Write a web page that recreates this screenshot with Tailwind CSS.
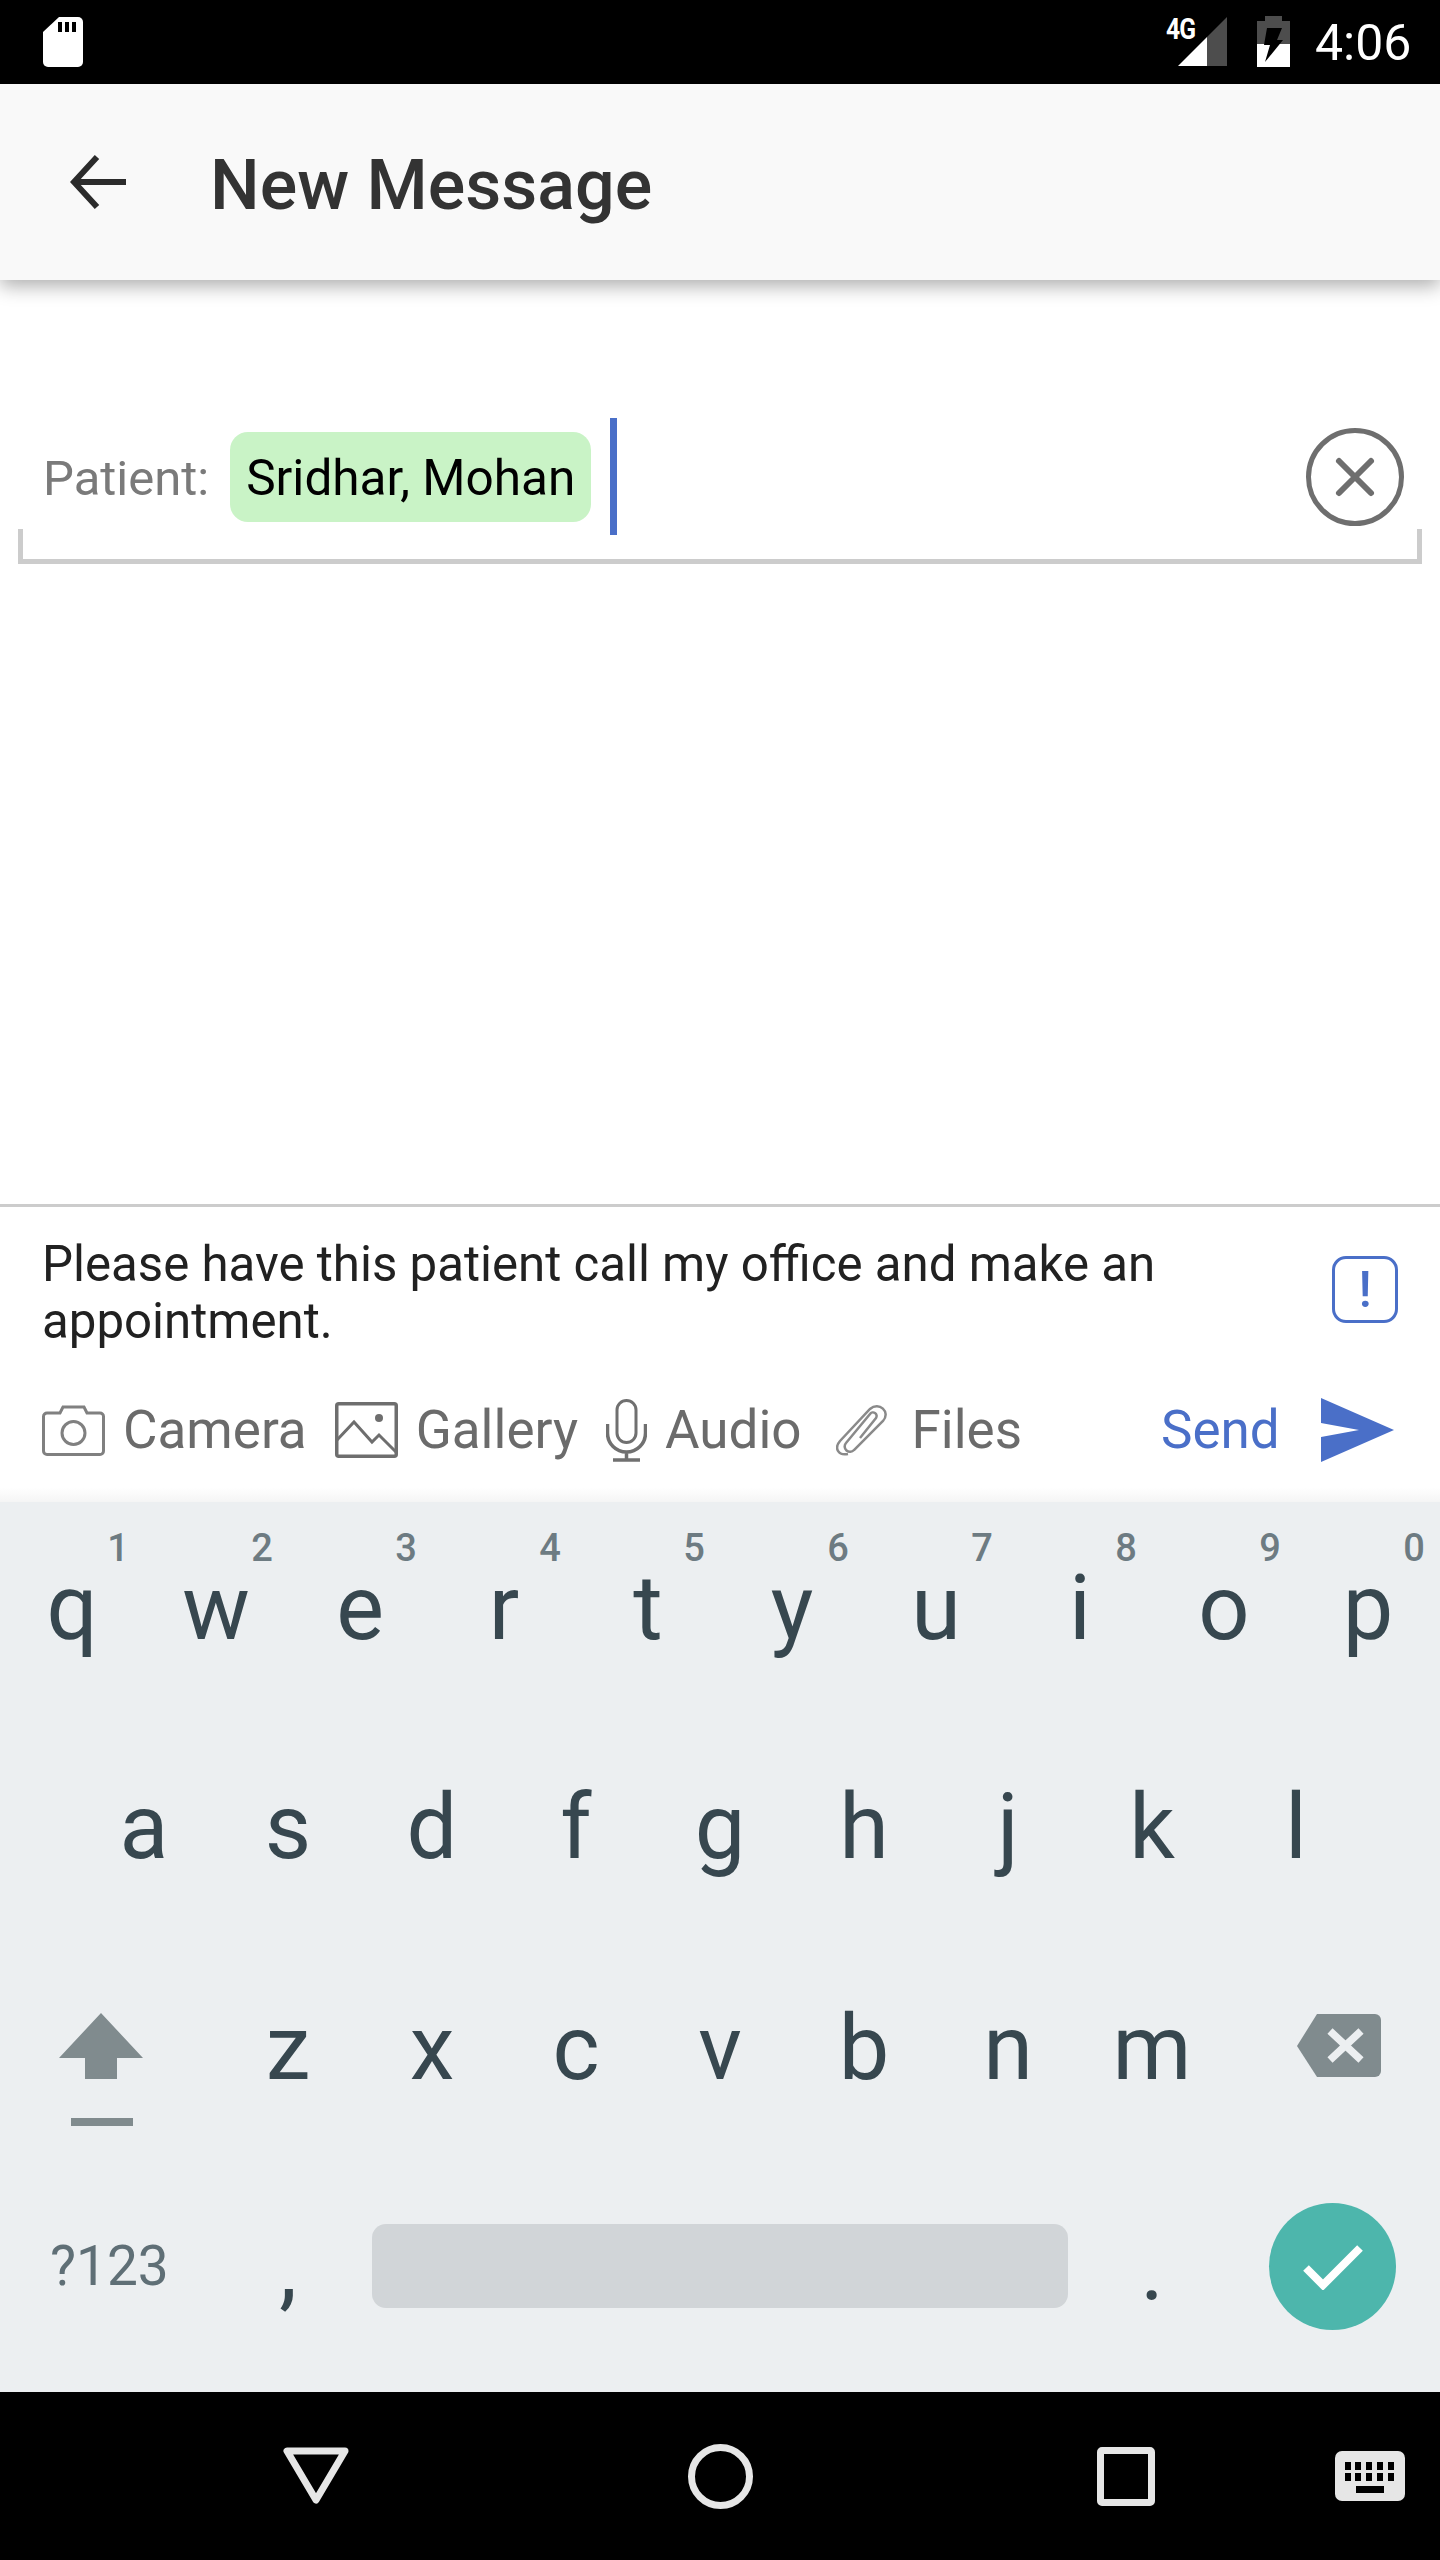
<!DOCTYPE html>
<html lang="en">
  <head>
    <meta charset="UTF-8" />
    <title>New Message</title>
    <script src="https://cdn.jsdelivr.net/npm/@tailwindcss/browser@4"></script>
  </head>
  <body class="bg-white">
    <div class="w-[1440px] h-[2560px] flex flex-col overflow-hidden font-['Roboto',sans-serif]">
      <!-- Status bar -->
      <div class="h-[84px] bg-black flex items-start shrink-0 relative">
        <svg class="ml-[43px] mt-[17px]" width="40" height="50" viewBox="0 0 40 50">
          <path d="M16 0H35a5 5 0 0 1 5 5V45a5 5 0 0 1-5 5H5a5 5 0 0 1-5-5V15Z" fill="#fff" />
          <path d="M15 5h4v10h-4zM22 5h4v10h-4zM29 5h4v10h-4z" fill="#000" />
        </svg>
        <span class="ml-[1083px] mt-[12px] text-[29px] leading-[34px] font-bold text-white tracking-[-1px] scale-x-[0.85] origin-left w-[0px] whitespace-nowrap">4G</span>
        <svg class="ml-[12px] mt-[17px]" width="49" height="50" viewBox="0 0 49 50">
          <path d="M29 20V49H0Z" fill="#fff" />
          <path d="M29 20L49 0V49H29Z" fill="#4d4d4d" />
        </svg>
        <svg class="ml-[30px] mt-[16px]" width="33" height="51" viewBox="0 0 33 51">
          <path d="M8 0H25V5H33V28H0V5H8Z" fill="#4d4d4d" />
          <path d="M0 28H33V51H0Z" fill="#fff" />
          <path d="M10 12H25L20 24H26L8 46L13 29H7Z" fill="#000" />
        </svg>
        <span class="ml-[25px] mt-[15px] text-[50px] leading-[57px] text-white">4:06</span>
      </div>

      <!-- App bar -->
      <div class="h-[196px] bg-[#f9f9f9] flex items-center shrink-0 shadow-[0_6px_18px_rgba(0,0,0,0.32)] z-10">
        <svg class="ml-[70px]" width="56" height="56" viewBox="0 0 56 56">
          <path d="M56 28H4M27 3L4 28L27 53" fill="none" stroke="#2b2b2b" stroke-width="6" />
        </svg>
        <h1 class="ml-[84px] mt-[6px] text-[70px] leading-none font-medium text-[#333]">New Message</h1>
      </div>

      <!-- Patient field -->
      <div class="mt-[138px] h-[117px] flex items-center shrink-0">
        <span class="ml-[43px] pt-[3px] text-[49px] leading-none text-[#7a7a7a]">Patient:</span>
        <span class="ml-[21px] h-[90px] px-[16px] pt-[5px] rounded-[18px] bg-[#c9f3c6] flex items-center text-[49.5px] leading-none text-black">Sridhar, Mohan</span>
        <span class="ml-[19px] w-[7px] h-[117px] bg-[#4a6fc8]"></span>
        <svg class="ml-auto mr-[36px]" width="98" height="98" viewBox="0 0 98 98">
          <circle cx="49" cy="49" r="46.5" fill="none" stroke="#6e6e6e" stroke-width="5" />
          <path d="M33 33L65 65M65 33L33 65" stroke="#6e6e6e" stroke-width="6" stroke-linecap="round" />
        </svg>
      </div>
      <div class="mx-[18px] -mt-[6px] h-[35px] border-x-[5px] border-b-[5px] border-[#cccccc] shrink-0"></div>

      <div class="flex-1"></div>

      <!-- Compose -->
      <div class="h-[298px] border-t-[3px] border-[#cccccc] shrink-0 relative bg-gradient-to-b from-white from-[95%] to-[#f5f5f5]">
        <div class="pl-[42px] pt-[29px] flex">
          <p class="w-[1180px] text-[49.2px] leading-[57px] text-[#212121]">Please have this patient call my office and make an appointment.</p>
          <div class="ml-[110px] mt-[20px] w-[66px] h-[67px] rounded-[14px] border-[3px] border-[#4a6fc8] flex items-center justify-center text-[50px] leading-none font-medium text-[#4a6fc8]">!</div>
        </div>
        <div class="mt-[40px] h-[80px] flex items-center text-[53px] leading-none text-[#6b6b6b]">
          <svg class="ml-[42px]" width="63" height="51" viewBox="0 0 63 51">
            <path d="M5 8H18L21 2H42L45 8H58A3.5 3.5 0 0 1 61.500 11.500V46A3.500 3.500 0 0 1 58 49.500H5A3.500 3.500 0 0 1 1.500 46V11.500A3.500 3.500 0 0 1 5 8Z" fill="none" stroke="#808080" stroke-width="3" />
            <circle cx="31.500" cy="28" r="11.500" fill="none" stroke="#808080" stroke-width="3" />
          </svg>
          <span class="ml-[18px]">Camera</span>
          <svg class="ml-[28px]" width="63" height="56" viewBox="0 0 63 56">
            <rect x="1.750" y="1.750" width="59.500" height="52.500" rx="2" fill="none" stroke="#6e6e6e" stroke-width="3.500" />
            <path d="M2 38L19 20L37 40L44 33L61 50" fill="none" stroke="#6e6e6e" stroke-width="3" />
            <circle cx="44" cy="16" r="4" fill="#6e6e6e" />
          </svg>
          <span class="ml-[18px]">Gallery</span>
          <svg class="ml-[28px]" width="41" height="63" viewBox="0 0 41 63">
            <rect x="11" y="1.500" width="19" height="42" rx="9.500" fill="none" stroke="#707070" stroke-width="3" />
            <path d="M1.500 25V34A19 19 0 0 0 39.500 34V25M20.500 53V60M7 61H34" fill="none" stroke="#707070" stroke-width="3.500" />
          </svg>
          <span class="ml-[18px]">Audio</span>
          <svg class="ml-[34px]" width="53" height="52" viewBox="0 0 53 52">
            <path d="M24 34L40 14A3.500 3.500 0 0 0 34 10L10 39A5 5 0 0 0 18 46L47 17C55 8 43 -3 34 5L4 37C-2 44 2 52 12 50" fill="none" stroke="#8a8a8a" stroke-width="2.500" />
          </svg>
          <span class="ml-[23px]">Files</span>
          <span class="ml-[139px] text-[#4a6fc8]">Send</span>
          <svg class="ml-[41px]" width="73" height="64" viewBox="0 0 73 64">
            <path d="M0 0L73 32L0 64V39L38 32L0 25Z" fill="#4a6fc8" />
          </svg>
        </div>
      </div>

      <!-- Keyboard -->
      <div class="h-[890px] bg-[#eceff1] shrink-0 text-[90px] leading-none text-[#37474f] text-center">
        <div class="h-[221px] flex pt-[62px]">
          <span class="relative w-[144px]">q<b class="absolute top-[-35px] left-[106px] w-[24px] text-[38px] font-medium text-[#6d7b82]">1</b></span>
          <span class="relative w-[144px]">w<b class="absolute top-[-35px] left-[106px] w-[24px] text-[38px] font-medium text-[#6d7b82]">2</b></span>
          <span class="relative w-[144px]">e<b class="absolute top-[-35px] left-[106px] w-[24px] text-[38px] font-medium text-[#6d7b82]">3</b></span>
          <span class="relative w-[144px]">r<b class="absolute top-[-35px] left-[106px] w-[24px] text-[38px] font-medium text-[#6d7b82]">4</b></span>
          <span class="relative w-[144px]">t<b class="absolute top-[-35px] left-[106px] w-[24px] text-[38px] font-medium text-[#6d7b82]">5</b></span>
          <span class="relative w-[144px]">y<b class="absolute top-[-35px] left-[106px] w-[24px] text-[38px] font-medium text-[#6d7b82]">6</b></span>
          <span class="relative w-[144px]">u<b class="absolute top-[-35px] left-[106px] w-[24px] text-[38px] font-medium text-[#6d7b82]">7</b></span>
          <span class="relative w-[144px]">i<b class="absolute top-[-35px] left-[106px] w-[24px] text-[38px] font-medium text-[#6d7b82]">8</b></span>
          <span class="relative w-[144px]">o<b class="absolute top-[-35px] left-[106px] w-[24px] text-[38px] font-medium text-[#6d7b82]">9</b></span>
          <span class="relative w-[144px]">p<b class="absolute top-[-35px] left-[106px] w-[24px] text-[38px] font-medium text-[#6d7b82]">0</b></span>
        </div>
        <div class="h-[221px] flex pt-[60px] pl-[72px]">
          <span class="w-[144px]">a</span>
          <span class="w-[144px]">s</span>
          <span class="w-[144px]">d</span>
          <span class="w-[144px]">f</span>
          <span class="w-[144px]">g</span>
          <span class="w-[144px]">h</span>
          <span class="w-[144px]">j</span>
          <span class="w-[144px]">k</span>
          <span class="w-[144px]">l</span>
        </div>
        <div class="h-[221px] flex pt-[60px]">
          <div class="w-[216px] pl-[59px] mt-[9px]">
            <svg width="84" height="113" viewBox="0 0 84 113">
              <path d="M42 0L84 45H58V66H26V45H0Z" fill="#808b8e" />
              <rect x="12" y="105" width="62" height="8" fill="#808b8e" />
            </svg>
          </div>
          <span class="w-[144px]">z</span>
          <span class="w-[144px]">x</span>
          <span class="w-[144px]">c</span>
          <span class="w-[144px]">v</span>
          <span class="w-[144px]">b</span>
          <span class="w-[144px]">n</span>
          <span class="w-[144px]">m</span>
          <div class="pl-[73px] mt-[10px]">
            <svg width="84" height="63" viewBox="0 0 84 63">
              <path d="M20 0H78A6 6 0 0 1 84 6V57A6 6 0 0 1 78 63H20L0 32Z" fill="#808b8e" />
              <path d="M33 17L64 46M64 17L33 46" stroke="#eceff1" stroke-width="7.500" />
            </svg>
          </div>
        </div>
        <div class="h-[227px] flex items-start">
          <span class="w-[216px] pl-[50px] pt-[74px] text-left text-[55px] text-[#5f6f76]">?123</span>
          <span class="w-[144px] pt-[59px]">,</span>
          <div class="ml-[12px] mt-[59px] w-[696px] h-[84px] rounded-[14px] bg-[#d1d5d8]"></div>
          <span class="ml-[12px] w-[144px] pt-[59px]">.</span>
          <div class="ml-[45px] mt-[38px] w-[127px] h-[127px] rounded-full bg-[#4db6ac] flex items-center justify-center">
            <svg width="60" height="46" viewBox="0 0 60 46">
              <path d="M3 24L20 41L57 4" fill="none" stroke="#fff" stroke-width="8" />
            </svg>
          </div>
        </div>
      </div>

      <!-- Nav bar -->
      <div class="h-[168px] bg-black flex items-center shrink-0">
        <svg class="ml-[283px]" width="66" height="58" viewBox="0 0 66 58">
          <path d="M4 4H62L33 53Z" fill="none" stroke="#e6e6e6" stroke-width="7" stroke-linejoin="round" />
        </svg>
        <svg class="ml-[339px]" width="65" height="65" viewBox="0 0 65 65">
          <circle cx="32.500" cy="32.500" r="29" fill="none" stroke="#e6e6e6" stroke-width="7" />
        </svg>
        <svg class="ml-[344px]" width="58" height="59" viewBox="0 0 58 59">
          <rect x="3.500" y="3.500" width="51" height="52" rx="1.500" fill="none" stroke="#e6e6e6" stroke-width="7" />
        </svg>
        <svg class="ml-[180px]" width="70" height="50" viewBox="0 0 70 50">
          <rect width="70" height="50" rx="7" fill="#e6e6e6" />
          <path d="M10 11h6v8h-6zM20 11h6v8h-6zM31 11h6v8h-6zM42 11h6v8h-6zM53 11h6v8h-6zM10 22h6v8h-6zM20 22h6v8h-6zM31 22h6v8h-6zM42 22h6v8h-6zM53 22h6v8h-6zM21 35h28v7h-28z" fill="#000" />
        </svg>
      </div>
    </div>
  </body>
</html>
